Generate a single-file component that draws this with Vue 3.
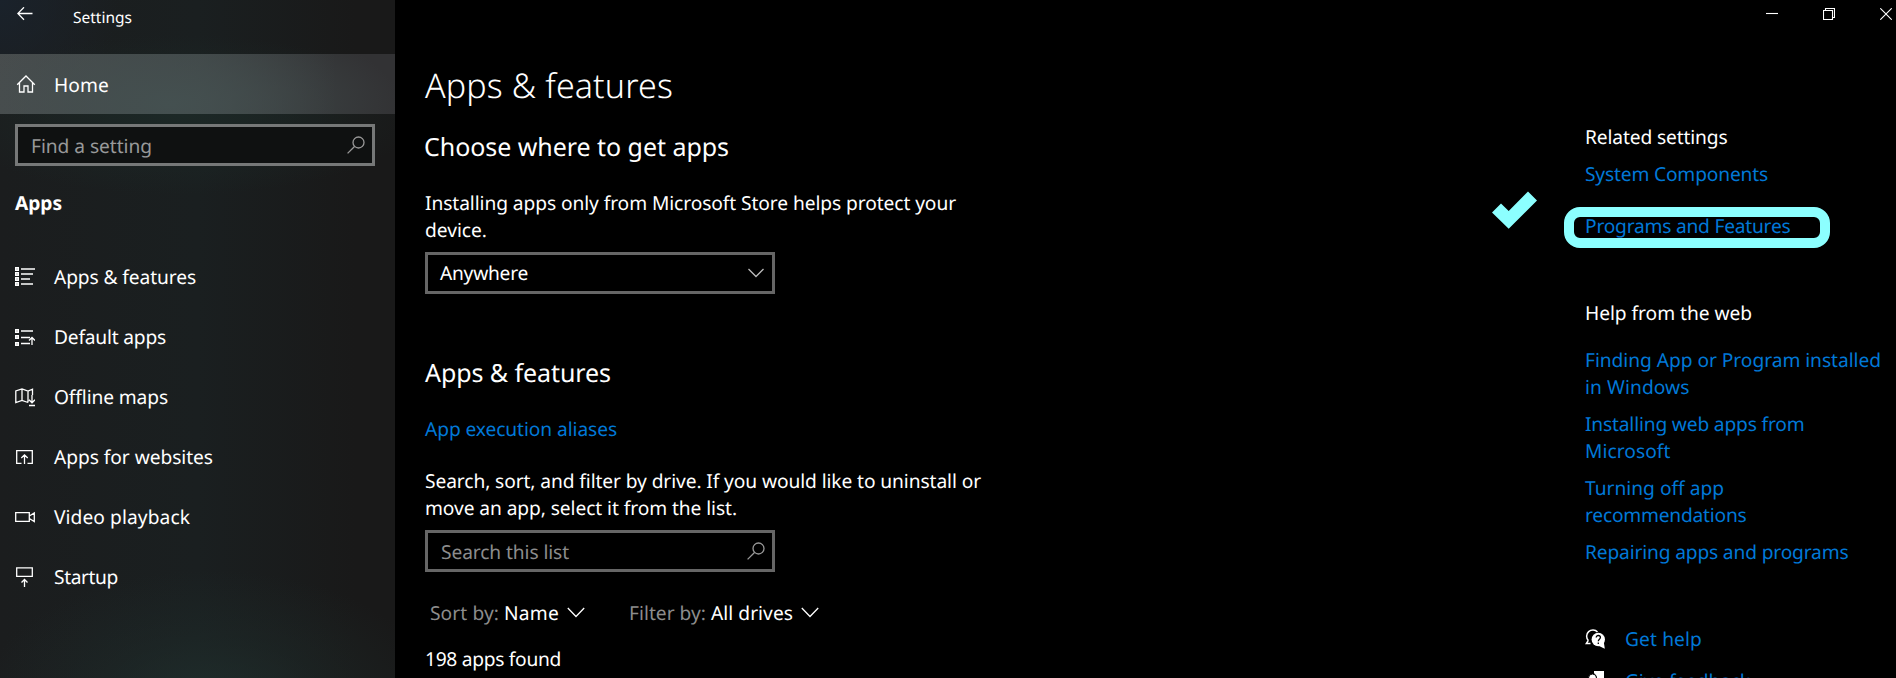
<script setup>
const navItems = [
  { icon: 'list', label: 'Apps & features', width: 142 },
  { icon: 'defaults', label: 'Default apps', width: 112 },
  { icon: 'map', label: 'Offline maps', width: 114 },
  { icon: 'web', label: 'Apps for websites', width: 159 },
  { icon: 'video', label: 'Video playback', width: 136 },
  { icon: 'startup', label: 'Startup', width: 64 },
]

const helpTopics = [
  [{ text: 'Finding App or Program installed', width: 296 }, { text: 'in Windows', width: 104.5 }],
  [{ text: 'Installing web apps from', width: 219.5 }, { text: 'Microsoft', width: 85.5 }],
  [{ text: 'Turning off app', width: 139 }, { text: 'recommendations', width: 161.5 }],
  [{ text: 'Repairing apps and programs', width: 263.5 }],
]

// Spreads the letters of a label so that it fills the given width.
const vFit = {
  mounted(el, { value }) {
    const natural = el.getBoundingClientRect().width
    const count = el.textContent.length
    el.style.letterSpacing = `${(value - natural) / count}px`
  },
}
</script>

<template>
  <div class="window">
    <aside class="sidebar">
      <header class="titlebar">
        <svg class="back" width="16" height="14" viewBox="0 0 16 14"><path d="M15.500 6.500H1M7 .3L.8 6.500L7 12.700" /></svg>
        <span v-fit="59" class="app-name">Settings</span>
      </header>
      <div class="home">
        <svg class="icon" width="20" height="20" viewBox="0 0 20 20"><path d="M1.200 10.700L10 2L18.800 10.700M3.500 8.800V18H8V12H12V18H16.500V8.800" /></svg>
        <span v-fit="55">Home</span>
      </div>
      <div class="field find">
        <span v-fit="121">Find a setting</span>
        <svg class="glass" width="18" height="18" viewBox="0 0 18 18"><circle cx="11.500" cy="6.500" r="5.500" /><path d="M7.500 10.500L.6 17.400" /></svg>
      </div>
      <h3 class="section"><span v-fit="47">Apps</span></h3>
      <nav>
        <div v-for="item in navItems" :key="item.icon" class="nav-item">
          <svg class="icon" width="20" height="20" viewBox="0 0 20 20">
            <template v-if="item.icon === 'list'">
              <path class="solid" d="M0 0h4v4H0zM0 5h4v4H0zM0 10h4v4H0zM0 15h4v4H0z" />
              <path class="hole" d="M1.500 1.500h1v1h-1zM1.500 6.500h1v1h-1zM1.500 11.500h1v1h-1zM1.500 16.500h1v1h-1z" />
              <path d="M6 2H20M6 7H18M6 12H15M6 17H18" />
            </template>
            <template v-else-if="item.icon === 'defaults'">
              <path class="solid" d="M0 2h4v4H0zM0 8h4v4H0zM0 15h4v4H0z" />
              <path class="hole" d="M1.500 3.500h1v1h-1zM1.500 9.500h1v1h-1zM1.500 16.500h1v1h-1z" />
              <path d="M6 4H18M6 10.500H15M6 16.500H15M17 18V10.500M14 13.500L17 10.500L20 13.500" />
            </template>
            <template v-else-if="item.icon === 'map'">
              <path d="M13 15.500L7 13.500L.8 15.500V4L7 2L13 4L17.500 2.200V8M7 2V13.500M13 4V15.500M17 8V15.500M14 12.800L17 15.800L20 12.800M14 18.500H20" />
            </template>
            <template v-else-if="item.icon === 'web'">
              <path d="M6.500 16.300H1.700V3.700H17.300V16.300H12.500M9.500 17V8M6.300 11L9.500 7.800L12.700 11" />
            </template>
            <template v-else-if="item.icon === 'video'">
              <path d="M.7 5.700H14.300V14.300H.7zM14.300 9L19.300 6V14.500L14.300 11.500" />
            </template>
            <template v-else>
              <path d="M1.700 .8H17.300V9.300H1.700zM9.500 20V13M6.500 15.500L9.500 12.500L12.500 15.500" />
            </template>
          </svg>
          <span v-fit="item.width">{{ item.label }}</span>
        </div>
      </nav>
    </aside>

    <main class="content">
      <h1><span v-fit="248">Apps &amp; features</span></h1>
      <h2 class="choose"><span v-fit="305">Choose where to get apps</span></h2>
      <p class="intro">
        <span v-fit="531">Installing apps only from Microsoft Store helps protect your</span><br>
        <span v-fit="62">device.</span>
      </p>
      <div class="field select">
        <span v-fit="88">Anywhere</span>
        <svg class="caret" width="16" height="10" viewBox="0 0 16 10"><path d="M.5 1L8 8.500L15.500 1" /></svg>
      </div>
      <h2 class="apps"><span v-fit="186">Apps &amp; features</span></h2>
      <a class="aliases"><span v-fit="192">App execution aliases</span></a>
      <p class="hint">
        <span v-fit="556">Search, sort, and filter by drive. If you would like to uninstall or</span><br>
        <span v-fit="312">move an app, select it from the list.</span>
      </p>
      <div class="field search">
        <span v-fit="128">Search this list</span>
        <svg class="glass" width="18" height="18" viewBox="0 0 18 18"><circle cx="11.500" cy="6.500" r="5.500" /><path d="M7.500 10.500L.6 17.400" /></svg>
      </div>
      <div class="filters">
        <div class="filter sort">
          <span v-fit="69" class="key">Sort by:</span>
          <span v-fit="55">Name</span>
          <svg width="18" height="11" viewBox="0 0 18 11"><path d="M.8 1L9 9.500L17.200 1" /></svg>
        </div>
        <div class="filter">
          <span v-fit="77" class="key">Filter by:</span>
          <span v-fit="82">All drives</span>
          <svg width="18" height="11" viewBox="0 0 18 11"><path d="M.8 1L9 9.500L17.200 1" /></svg>
        </div>
      </div>
      <p class="count"><span v-fit="136">198 apps found</span></p>
    </main>

    <aside class="related">
      <div class="controls">
        <svg width="12" height="12" viewBox="0 0 12 12"><path d="M0 5.500H12" /></svg>
        <svg width="12" height="12" viewBox="0 0 12 12"><path d="M.5 2.500H9.500V11.500H.5zM2.500 2.500V.5H11.500V9.500H9.500" /></svg>
        <svg width="12" height="12" viewBox="0 0 12 12"><path d="M.3 .3L11.700 11.700M11.700 .3L.3 11.700" /></svg>
      </div>
      <p class="heading"><span v-fit="142.500">Related settings</span></p>
      <a class="system"><span v-fit="183">System Components</span></a>
      <div class="programs">
        <a><span v-fit="205.500">Programs and Features</span></a>
        <div class="marker"></div>
        <svg class="tick" width="46" height="38" viewBox="0 0 46 38"><path d="M0 21.500L9 12.500L16.700 20L36 .5L45 9.500L16.700 37.700z" /></svg>
      </div>
      <p class="help"><span v-fit="167">Help from the web</span></p>
      <div class="topics">
        <a v-for="(lines, i) in helpTopics" :key="i">
          <span v-for="line in lines" :key="line.text" class="line"><span v-fit="line.width">{{ line.text }}</span></span>
        </a>
      </div>
      <div class="action">
        <svg width="20" height="20" viewBox="0 0 20 20">
          <path class="outline" d="M3.300 11.500A6 6 0 1 1 12.500 3M3.300 11.300L1.300 14.500H5.500" />
          <circle class="solid" cx="13.300" cy="10.500" r="6.700" />
          <path class="solid" d="M14 17L19.800 19.800L18.800 13z" />
          <path class="mark" d="M11.200 8.500C11.200 5.800 15.400 5.800 15.400 8.500C15.400 10.200 13.300 10.200 13.300 12.200M13.300 13.500V15" />
        </svg>
        <a><span v-fit="77">Get help</span></a>
      </div>
      <div class="action feedback">
        <svg width="20" height="20" viewBox="0 0 20 20">
          <path class="solid" d="M9 0H19V9H14L12 11V6L9 2z" />
          <circle class="solid" cx="7.500" cy="7" r="4" />
          <path class="solid" d="M0 20C0 10 15 10 15 20z" />
        </svg>
        <a><span v-fit="125">Give feedback</span></a>
      </div>
    </aside>
  </div>
</template>

<style>
body {
  background: #000;
  overflow: hidden;
}
</style>

<style scoped>
.window {
  display: grid;
  grid-template-columns: 395px 1fr 332px;
  height: 678px;
  overflow: hidden;
  background: #000;
  color: #fff;
  font: 19.2px/27px "Noto Sans", "Open Sans", sans-serif;
  text-rendering: geometricPrecision;
  white-space: nowrap;
}
h1, h2, h3, p {
  margin: 0;
  font-weight: 400;
}
span {
  display: inline-block;
}
svg {
  flex: none;
  fill: none;
  stroke: #fff;
  stroke-width: 1.3;
}
a {
  display: block;
  color: #0078d7;
}
.solid {
  fill: #fff;
  stroke: none;
}

.sidebar {
  background:
    radial-gradient(ellipse 230px 130px at 210px 700px, #20302ecc 0%, #20302e55 50%, #20302e00 100%),
    radial-gradient(ellipse 240px 80px at 180px 115px, #1c2826 0%, #1c282600 100%),
    radial-gradient(ellipse 120px 120px at 0 0, #1a222b 0%, #1a222b00 100%),
    linear-gradient(90deg, #1b1d1e 0%, #1a1f20 50%, #191919 90%);
}
.titlebar {
  display: flex;
  height: 47px;
  padding: 7px 0 0 17px;
}
.app-name {
  margin-left: 40px;
  font-size: 15.5px;
  line-height: 20px;
}
.home {
  display: flex;
  align-items: center;
  gap: 18px;
  height: 60px;
  padding-left: 16px;
  background:
    radial-gradient(ellipse 230px 90px at 170px 50px, #445050 0%, #44505000 100%),
    linear-gradient(90deg, #484c4d 0%, #414647 50%, #323234 85%);
}
.field {
  box-sizing: border-box;
  display: flex;
  align-items: center;
  justify-content: space-between;
  height: 42px;
  border: 3px solid #666;
}
.glass {
  stroke: #999;
}
.find {
  width: 360px;
  margin: 10px 0 0 15px;
  padding: 0 7px 0 13px;
  border-color: #767878;
  background: #0f1111;
  color: #989999;
}
.find svg,
.search svg {
  margin-bottom: 1px;
}
.section {
  margin: 23px 0 31px 15px;
  font-size: 19.2px;
  font-weight: 700;
}
.nav-item {
  display: flex;
  align-items: center;
  gap: 19px;
  height: 60px;
  padding-left: 15px;
}
.nav-item > span {
  margin-bottom: 2px;
}
.hole {
  fill: #777;
  stroke: none;
}

.content {
  padding: 62px 0 0 30px;
}
h1 {
  font-size: 34px;
  font-weight: 350;
  line-height: 46px;
}
h2 {
  font-size: 25px;
  line-height: 32px;
}
.choose {
  margin: 23px 0 26px -1px;
}
.select,
.search {
  width: 350px;
  margin-top: 9px;
}
.select {
  padding: 0 8px 0 12px;
}
.select > span {
  margin-bottom: 2px;
}
.select svg {
  stroke: #bbb;
}
.apps {
  margin: 63px 0 26px;
}
.hint {
  margin-top: 25px;
}
.search {
  padding: 0 7px 0 13px;
  color: #8c8c8c;
}
.filters {
  display: flex;
  margin: 27px 0 19px 5px;
}
.filter {
  display: flex;
  align-items: center;
  gap: 5px;
}
.filter svg {
  margin-left: 3px;
}
.sort {
  width: 199px;
}
.key {
  color: #8c8c8c;
}

.related {
  padding-left: 21px;
}
.controls {
  display: flex;
  justify-content: space-between;
  width: 126px;
  height: 115px;
  padding: 8px 0 0 181px;
}
.controls svg {
  stroke-width: 1.1;
}
.system {
  margin-top: 10px;
}
.programs {
  position: relative;
  margin-top: 25px;
}
.marker {
  position: absolute;
  box-sizing: border-box;
  top: -5px;
  left: -21px;
  width: 266px;
  height: 41px;
  border: 10px solid #8cffff;
  border-radius: 16px;
}
.tick {
  position: absolute;
  top: -21px;
  left: -93px;
}
.tick path {
  fill: #8cffff;
  stroke: none;
}
.help {
  margin: 60px 0 20px;
}
.topics {
  display: grid;
  gap: 10px;
}
.line {
  display: block;
}
.action {
  display: flex;
  align-items: center;
  gap: 20px;
  margin-top: 60px;
}
.feedback {
  margin-top: 15px;
}
.feedback circle {
  stroke: #000;
  stroke-width: 1;
}
.outline {
  stroke-width: 1.5;
}
.mark {
  stroke: #000;
}
</style>
